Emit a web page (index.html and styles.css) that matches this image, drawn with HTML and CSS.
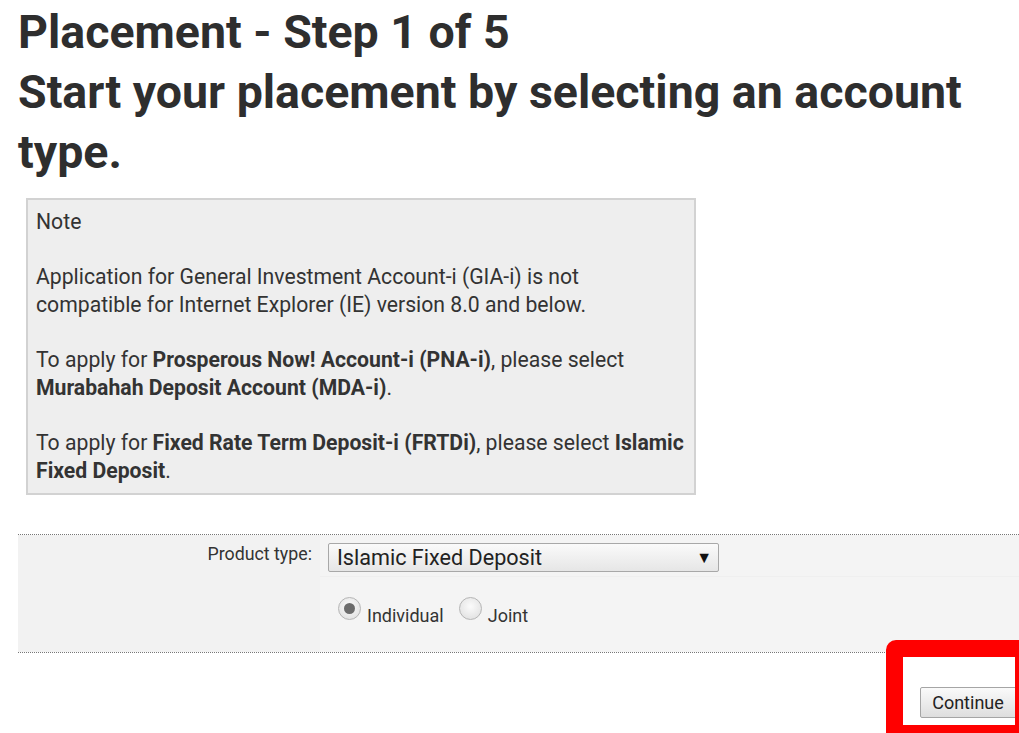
FILE: index.html
```html
<!DOCTYPE html>
<html>
<head>
<meta charset="utf-8">
<link rel="stylesheet" href="styles.css">
</head>
<body>
<h1 class="title">Placement - Step 1 of 5<br>Start your placement by selecting an account type.</h1>
<div class="note">
  <p>Note</p>
  <p>Application for General Investment Account-i (GIA-i) is not compatible for Internet Explorer (IE) version 8.0 and below.</p>
  <p>To apply for <b>Prosperous Now! Account-i (PNA-i)</b>, please select <b>Murabahah Deposit Account (MDA-i)</b>.</p>
  <p>To apply for <b>Fixed Rate Term Deposit-i (FRTDi)</b>, please select <b>Islamic Fixed Deposit</b>.</p>
</div>
<div class="form">
  <div class="row row1">
    <div class="label">Product type:</div>
    <div class="field">
      <div class="select"><span>Islamic Fixed Deposit</span><span class="arrow">▼</span></div>
    </div>
  </div>
  <div class="row row2">
    <div class="label"></div>
    <div class="field radios">
      <span class="radio checked"></span><span class="rlabel">Individual</span>
      <span class="radio"></span><span class="rlabel">Joint</span>
    </div>
  </div>
</div>
<div class="actions">
  <button class="btn">Continue</button>
  <div class="highlight"></div>
</div>
</body>
</html>
```
FILE: styles.css
```css
html, body { margin: 0; padding: 0; background: #fff; }
body {
  font-family: Roboto, "Noto Sans", sans-serif;
  color: #333;
  padding-left: 18px;
  overflow: hidden;
  height: 733px;
  position: relative;
}
.title {
  margin: 0;
  padding-top: 2px;
  font-size: 46.5px;
  line-height: 60px;
  font-weight: 700;
  color: #2e2e2e;
  width: 980px;
}
.note {
  margin: 16px 0 0 8px;
  width: 651px;
  background: #eeeeee;
  border: 2px solid #d2d2d2;
  padding: 8px 7px 8px 8px;
  font-size: 21.2px;
  line-height: 28px;
  color: #333;
}
.note p { margin: 0 0 27px 0; }
.note p:last-child { margin-bottom: 0; }
.note b { font-weight: 700; }
.form {
  margin-top: 39px;
  border-top: 1px dotted #777;
  border-bottom: 1px dotted #777;
}
.row { display: flex; }
.row1 { height: 42px; }
.row2 { height: 75px; }
.label {
  width: 294px;
  text-align: right;
  padding-right: 8px;
  background: #f2f2f2;
  font-size: 17.8px;
  padding-top: 8px;
  box-sizing: content-box;
}
.field {
  flex: 1;
  background: #f4f4f4;
  padding-left: 8px;
  padding-top: 8px;
}
.row1 .field { border-bottom: 1px solid #efefef; }
.select {
  width: 391px;
  height: 29px;
  box-sizing: border-box;
  border: 1px solid #a8a8a8;
  border-radius: 2px;
  background: linear-gradient(#fafafa, #e6e6e6);
  display: flex;
  justify-content: space-between;
  align-items: center;
  padding: 0 6px 0 8px;
  font-size: 21.6px;
  color: #222;
}
.select .arrow { font-size: 16px; color: #111; }
.radios {
  display: flex;
  align-items: flex-start;
  padding-top: 20px;
  padding-left: 18px;
}
.radio {
  width: 23px; height: 23px;
  border-radius: 50%;
  border: 1px solid #b5b5b5;
  background: radial-gradient(circle at 50% 40%, #fbfbfb, #dcdcdc);
  box-sizing: border-box;
  position: relative;
}
.radio.checked::after {
  content: "";
  position: absolute;
  left: 5px; top: 5px;
  width: 11px; height: 11px;
  border-radius: 50%;
  background: #6b6b6b;
}
.rlabel {
  font-size: 18px;
  margin-left: 6px;
  margin-right: 15px;
  margin-top: 8px;
  color: #333;
}
.actions {
  display: flex;
  justify-content: flex-end;
  padding-top: 34px;
  padding-right: 0;
}
.btn {
  font-family: Roboto, "Noto Sans", sans-serif;
  font-size: 18px;
  color: #222;
  width: 99px;
  height: 31px;
  border: 1px solid #a5a5a5;
  border-radius: 2px;
  background: linear-gradient(#fafafa, #dedede);
  padding: 0 3px 0 0;
}
.highlight {
  position: absolute;
  left: 886px;
  top: 640px;
  width: 146px;
  height: 102px;
  border: 17px solid #ff0000;
  border-radius: 10px;
  box-sizing: border-box;
  pointer-events: none;
}
```
